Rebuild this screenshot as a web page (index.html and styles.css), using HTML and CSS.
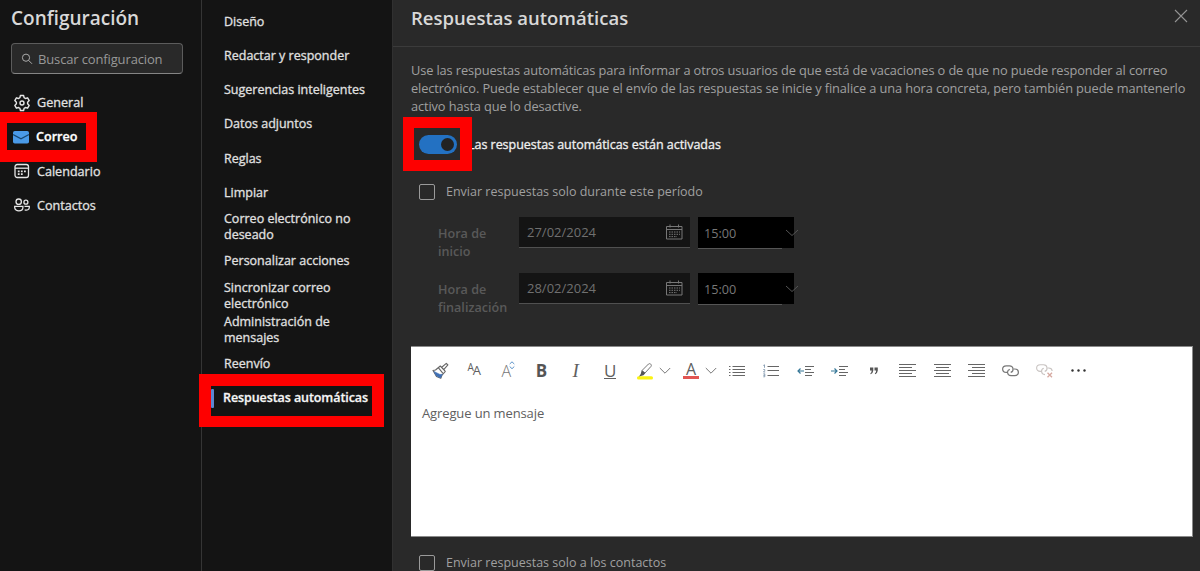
FILE: index.html
```html
<!DOCTYPE html>
<html lang="es">
<head>
<meta charset="utf-8">
<title>Configuración</title>
<link rel="stylesheet" href="styles.css">
</head>
<body>
<div class="app">
  <aside class="sidebar">
    <h1 class="title">Configuración</h1>
    <div class="search">
      <svg width="12" height="12" viewBox="0 0 12 12" fill="none" stroke="#aaa" stroke-width="1"><circle cx="5" cy="4.7" r="3.6"/><path d="M7.6 7.4 11 10.8"/></svg>
      <span class="search-text">Buscar configuracion</span>
    </div>
    <nav class="nav">
      <a class="nav-item">
        <svg width="18" height="18" viewBox="0 0 18 18" fill="none" stroke="#e6e6e6" stroke-width="1.4" stroke-linejoin="round"><path d="M7.4 1.5h3.2l.5 2.2 1.3.8 2.2-.7 1.6 2.8-1.6 1.6v1.6l1.6 1.6-1.6 2.8-2.2-.7-1.3.8-.5 2.2H7.4l-.5-2.2-1.3-.8-2.2.7-1.6-2.8 1.6-1.6V8.2L1.8 6.6l1.6-2.8 2.2.7 1.3-.8z"/><circle cx="9" cy="9" r="2"/></svg>
        <span>General</span></a>
      <a class="nav-item selected">
        <svg width="18" height="18" viewBox="0 0 18 18"><rect x="0" y="3" width="16" height="12.5" rx="1.8" fill="#4a9ae8"/><path d="M0 6.5 8 10.8 16 6.5" fill="none" stroke="#17466f" stroke-width="1.3"/></svg>
        <span>Correo</span></a>
      <a class="nav-item">
        <svg width="18" height="18" viewBox="0 0 18 18" fill="none" stroke="#e6e6e6" stroke-width="1.3"><rect x="2" y="2.5" width="13.5" height="13" rx="2.2"/><path d="M2 6.2h13.5"/><path d="M4.800 9.300h1.800m1.300 0h1.800m1.300 0h1.800M4.800 12.200h1.800m1.300 0h1.800" stroke-width="1.7"/></svg>
        <span>Calendario</span></a>
      <a class="nav-item">
        <svg width="18" height="18" viewBox="0 0 18 18" fill="none" stroke="#e6e6e6" stroke-width="1.3"><circle cx="5.7" cy="5.7" r="2.7"/><circle cx="12.9" cy="6.2" r="2"/><path d="M1.700 10.300h8.200v1.300c0 4.300-8.200 4.300-8.200 0zM11.500 10.300h4.800v1.200c0 2.300-2.200 3-4.600 2.300"/></svg>
        <span>Contactos</span></a>
    </nav>
    <div class="frame frame-mail"></div>
  </aside>

  <nav class="subnav">
    <a class="sub-item">Diseño</a>
    <a class="sub-item">Redactar y responder</a>
    <a class="sub-item">Sugerencias inteligentes</a>
    <a class="sub-item">Datos adjuntos</a>
    <a class="sub-item">Reglas</a>
    <a class="sub-item">Limpiar</a>
    <a class="sub-item">Correo electrónico no<br>deseado</a>
    <a class="sub-item">Personalizar acciones</a>
    <a class="sub-item">Sincronizar correo<br>electrónico</a>
    <a class="sub-item">Administración de<br>mensajes</a>
    <a class="sub-item">Reenvío</a>
    <a class="sub-item current">Respuestas automáticas</a>
    <div class="frame frame-replies"></div>
  </nav>

  <main class="panel">
    <header class="panel-head">
      <h2 class="panel-title">Respuestas automáticas</h2>
      <svg width="14" height="14" viewBox="0 0 14 14" stroke="#949494" stroke-width="1.1"><path d="M1 1l12 12M13 1 1 13"/></svg>
    </header>
    <div class="panel-body">
      <p class="intro">Use las respuestas automáticas para informar a otros usuarios de que está de vacaciones o de que no puede responder al correo<br>electrónico. Puede establecer que el envío de las respuestas se inicie y finalice a una hora concreta, pero también puede mantenerlo<br>activo hasta que lo desactive.</p>
      <div class="toggle-row">
        <span class="toggle"><span class="knob"></span></span>
        <span class="toggle-label">Las respuestas automáticas están activadas</span>
        <div class="frame frame-toggle"></div>
      </div>
      <div class="check-row">
        <span class="box"></span><span class="check-label">Enviar respuestas solo durante este período</span>
      </div>
      <div class="time-row">
        <span class="time-label">Hora de<br>inicio</span>
        <div class="date"><span>27/02/2024</span>
          <svg width="17" height="16" viewBox="0 0 17 16" fill="none" stroke="#777" stroke-width="1"><path d="M.5 2.500h15.500v12.500H.5zM.5 5.500H16M4 .5v3M12.500.5v3"/><path d="M3 8h11M3 10.300h11M3 12.600h8" stroke-dasharray="1.500 1"/></svg></div>
        <div class="hour"><span>15:00</span>
          <svg class="hour-chev" width="14" height="8" viewBox="0 0 14 8" fill="none" stroke="#555"><path d="M1 1l6 5.500L13 1"/></svg></div>
      </div>
      <div class="time-row">
        <span class="time-label">Hora de<br>finalización</span>
        <div class="date"><span>28/02/2024</span>
          <svg width="17" height="16" viewBox="0 0 17 16" fill="none" stroke="#777" stroke-width="1"><path d="M.5 2.500h15.500v12.500H.5zM.5 5.500H16M4 .5v3M12.500.5v3"/><path d="M3 8h11M3 10.300h11M3 12.600h8" stroke-dasharray="1.500 1"/></svg></div>
        <div class="hour"><span>15:00</span>
          <svg class="hour-chev" width="14" height="8" viewBox="0 0 14 8" fill="none" stroke="#555"><path d="M1 1l6 5.500L13 1"/></svg></div>
      </div>
      <section class="editor">
        <div class="toolbar">
          <span class="tool"><svg width="18" height="18" viewBox="0 0 18 18" fill="#fff" stroke="#666" stroke-width="1.1" stroke-linejoin="round"><path d="M10.500 5.500 15.300 1.300l1.600 1.600-4.200 4.800z"/><path d="M2 8.500 4.500 8l4.800-4 5 5.300-3.500 4.200-1 2.700-4.300-1.700z"/><path d="M3 9.500 9 12.500l2.300-.2L9.500 16l-4.300-2.300z" fill="#3f70b5" stroke="#3f70b5" stroke-width=".6"/><path d="M7.300 5.700 12 11.300"/></svg></span>
          <span class="tool"><span class="aa"><span class="aa-small">A</span><span class="aa-big">A</span></span></span>
          <span class="tool"><span class="asize">A</span><svg class="asize-arrows" width="6" height="9" viewBox="0 0 6 9" fill="none" stroke="#5b92c8"><path d="M.7 3 3 .8 5.300 3M.7 5.500 3 7.700l2.300-2.200"/></svg></span>
          <span class="tool bold">B</span>
          <span class="tool italic">I</span>
          <span class="tool under"><span class="under-glyph">U</span></span>
          <span class="tool"><svg width="18" height="18" viewBox="0 0 18 18"><rect x="1" y="14.200" width="16" height="3.400" rx="1.500" fill="#fbf312"/><path d="M6 8.500 12.500 2c1.300-1.200 3.700.7 2.500 2.400L9 11z" fill="#fff" stroke="#777"/><path d="M5.700 8.200 9.300 11.300 7.500 13.300 3 14.500 4.700 12z" fill="#555"/></svg></span>
          <svg class="chev" width="12" height="8" viewBox="0 0 12 8" fill="none" stroke="#777"><path d="M.8 1 6 6.200 11.200 1"/></svg>
          <span class="tool"><span class="acolor">A</span></span>
          <svg class="chev" width="12" height="8" viewBox="0 0 12 8" fill="none" stroke="#777"><path d="M.8 1 6 6.200 11.200 1"/></svg>
          <span class="tool"><svg width="16" height="14" viewBox="0 0 16 14" stroke="#666" stroke-width="1"><path d="M3.500 2.500H16M3.500 5.500H16M3.500 8.500H16M3.500 11.500H16M0 2.500h1.500M0 5.500h1.500M0 8.500h1.500M0 11.500h1.500"/></svg></span>
          <span class="tool"><svg width="16" height="14" viewBox="0 0 16 14" fill="none" stroke="#666"><path d="M4.500 2.500H16M4.500 6.500H16M4.500 11.500H16"/><path d="M.3 1.500 1.500.8v3M.3 5.500h1.400v1.200L.5 8h1.700M.3 9.800h1.500v3H.3m0-1.500h1.500" stroke="#718ba5" stroke-width=".8"/></svg></span>
          <span class="tool"><svg width="17" height="12" viewBox="0 0 17 12" fill="none" stroke="#666"><path d="M8 1.500h9M8 4.500h6M8 7.500h9M8 10.500h7"/><path d="M7 6H1M3.500 3.500 1 6l2.500 2.500" stroke="#377898" stroke-width="1.2"/></svg></span>
          <span class="tool"><svg width="17" height="12" viewBox="0 0 17 12" fill="none" stroke="#666"><path d="M8 1.500h9M8 4.500h6M8 7.500h9M8 10.500h7"/><path d="M0 6h6M3.500 3.500 6 6 3.500 8.500" stroke="#377898" stroke-width="1.2"/></svg></span>
          <span class="tool"><svg width="8" height="8" viewBox="0 0 8 8" fill="#555"><path d="M0 .5h3.300v3Q3 6.500.7 7.300L.3 6.400Q1.700 5.500 1.700 3.500H0zM4.500.5h3.300v3Q7.500 6.500 5.200 7.300l-.4-.9Q6.200 5.500 6.200 3.500H4.500z"/></svg></span>
          <span class="tool"><svg width="17" height="14" viewBox="0 0 17 14" stroke="#666"><path d="M0 .5h17M0 3.500h13M0 6.500h17M0 9.500h13M0 12.500h17"/></svg></span>
          <span class="tool"><svg width="17" height="14" viewBox="0 0 17 14" stroke="#666"><path d="M0 .5h17M2 3.500h13M0 6.500h17M2 9.500h13M0 12.500h17"/></svg></span>
          <span class="tool"><svg width="17" height="14" viewBox="0 0 17 14" stroke="#666"><path d="M0 .5h17M4 3.500h13M0 6.500h17M4 9.500h13M0 12.500h17"/></svg></span>
          <span class="tool"><svg width="17" height="12" viewBox="0 0 17 12" fill="none" stroke="#777" stroke-width="1.2"><path d="M5.500 7.400H4.300C-.6 7.400-.6.8 4.300.8h3.200c4.400 0 4.600 5.800 1.200 6.600"/><path d="M11.500 4h1.200c4.900 0 4.900 6.600 0 6.600H9C4.800 10.600 4.500 5.200 7.800 4.300"/></svg></span>
          <span class="tool"><svg width="17" height="15" viewBox="0 0 17 15" fill="none" stroke="#c9c4c2" stroke-width="1.1"><path d="M5.500 8.400H4.300C-.6 8.400-.6 1.800 4.300 1.800h3.200c4.400 0 4.600 5.800 1.200 6.600"/><path d="M11.500 5h1.200c2 0 3.300 1.200 3.500 3M9 11.600C4.800 11.600 4.500 6.200 7.800 5.300"/><path d="M11.500 9.800l4.500 4.500M16 9.800l-4.500 4.500" stroke="#d6a9a1" stroke-width="1.3"/></svg></span>
          <span class="tool"><svg width="15" height="3" viewBox="0 0 15 3" fill="#333"><circle cx="1.5" cy="1.5" r="1.2"/><circle cx="7.5" cy="1.5" r="1.2"/><circle cx="13.5" cy="1.5" r="1.2"/></svg></span>
        </div>
        <div class="placeholder">Agregue un mensaje</div>
      </section>
      <div class="check-row last">
        <span class="box"></span><span class="check-label contacts">Enviar respuestas solo a los contactos</span>
      </div>
    </div>
  </main>
</div>
</body>
</html>
```

FILE: styles.css
```css
* { box-sizing: border-box; }
body { margin: 0; background: #292929; font-family: "Open Sans", "Noto Sans", sans-serif; font-size: 13px; overflow: hidden; }
svg { display: block; flex: none; }
.app { display: grid; grid-template-columns: 201px 191px 1fr; width: 1200px; height: 571px; overflow: hidden; white-space: nowrap; }

.sidebar { position: relative; background: #141414; padding: 5px 0 0 11px; }
.title { margin: 0; font-size: 19px; line-height: 26px; font-weight: 600; color: #d8d8d8; }
.search { display: flex; align-items: center; gap: 5px; width: 172px; height: 31px; margin-top: 12px; padding-left: 9px; background: #292929; border: 1px solid #5c5c5c; border-bottom-color: #858585; border-radius: 4px; color: #989898; }
.search-text { letter-spacing: -0.14px; }
.nav { display: flex; flex-direction: column; margin-top: 11.5px; }
.nav-item { display: flex; align-items: center; gap: 6px; height: 34.25px; padding-left: 2px; color: #e2e2e2; font-size: 12.6px; -webkit-text-stroke: 0.3px #e2e2e2; }
.nav-item.selected { gap: 5px; color: #fff; font-weight: 600; -webkit-text-stroke-color: #fff; }

.frame { position: absolute; border: solid #fe0000; }
.frame-mail { left: 0; top: 112px; width: 97px; height: 50px; border-width: 11px 11px 12px 7px; }
.frame-replies { left: -3px; top: 374px; width: 185px; height: 53px; border-width: 12px 12px 11px 12px; }
.frame-toggle { left: -8px; top: -14px; width: 69px; height: 54px; border-width: 11px 12px 11px 11px; }

.subnav { position: relative; background: #141414; border-left: 1px solid #353535; padding: 4.5px 0 0 22px; }
.sub-item { display: flex; align-items: center; height: 34.25px; color: #e0e0e0; font-size: 12.5px; line-height: 16px; -webkit-text-stroke: 0.3px #e0e0e0; }
.sub-item.current { margin-left: -13px; color: #fff; font-weight: 600; letter-spacing: -0.08px; }
.sub-item.current::before { content: ""; width: 3px; height: 19px; margin-right: 9px; border-radius: 1px; background: #5c86d2; }

.panel { background: #292929; border-left: 1px solid #303030; }
.panel-head { display: flex; justify-content: space-between; height: 47px; padding: 5px 12px 0 18px; border-bottom: 1px solid #3b3b3b; }
.panel-head svg { margin-top: 4px; }
.panel-title { margin: 0; font-size: 18.5px; line-height: 26px; font-weight: 600; color: #d8d8d8; }
.panel-body { padding: 14px 0 0 18px; }
.intro { margin: 0; font-size: 12.8px; line-height: 18.2px; letter-spacing: -0.11px; color: #a0a0a0; }
.toggle-row { position: relative; display: flex; align-items: center; height: 28px; margin-top: 15px; padding-left: 8px; }
.toggle { display: flex; justify-content: flex-end; align-items: center; width: 38px; height: 19px; padding-right: 3px; border-radius: 10px; background: #2371c2; }
.knob { width: 13px; height: 13px; border-radius: 50%; background: #222; }
.toggle-label { margin-left: 11px; font-size: 12.5px; letter-spacing: -0.03px; color: #f0f0f0; -webkit-text-stroke: 0.3px #f0f0f0; }
.check-row { display: flex; align-items: center; gap: 11px; height: 20px; margin-top: 23px; padding-left: 8px; color: #a0a0a0; font-size: 12.5px; }
.box { width: 16px; height: 16px; border: 1px solid #9a9a9a; border-radius: 2px; }
.time-row { display: flex; height: 56px; padding-left: 27px; color: #686868; }
.check-row + .time-row { margin-top: 15px; }
.time-label { width: 81px; padding-top: 8px; line-height: 18px; font-size: 12.6px; font-weight: 600; color: #595959; }
.date { display: flex; align-items: center; justify-content: space-between; width: 171px; height: 31px; padding: 0 7px 0 8px; background: #141414; border-bottom: 1px solid #505050; color: #707070; }
.hour { position: relative; width: 96px; height: 31px; margin-left: 8px; padding: 0 6px; background: #000; line-height: 32px; font-size: 12.7px; color: #777; }
.hour::after { content: ""; position: absolute; left: 0; bottom: -1px; width: 84px; height: 1px; background: #555; }
.hour-chev { position: absolute; right: -5px; top: 12px; }

.editor { width: 782px; height: 191px; margin-top: 17px; background: #fff; border: 1px solid #8a8a8a; border-width: 1px 1px 1px 0; }
.toolbar { display: flex; align-items: center; height: 48px; padding-left: 12px; color: #606060; }
.tool { display: flex; align-items: center; justify-content: center; flex: none; width: 34.15px; height: 30px; font-size: 17px; line-height: 24px; }
.chev { margin: 0 3px 0 -3px; }
.aa { display: flex; align-items: flex-start; }
.aa-small { font-size: 10px; line-height: 10px; }
.aa-big { font-size: 13px; line-height: 17px; margin-left: -1px; }
.asize { color: #777; font-size: 16px; font-weight: 300; }
.asize-arrows { margin: -11px 0 0 -2px; }
.bold { font-weight: 700; color: #555; padding-right: 2px; }
.italic { font-family: "Liberation Serif", serif; font-style: italic; font-size: 19px; padding-right: 2px; }
.under { padding-right: 1px; }
.under-glyph { line-height: 15px; border-bottom: 1px solid #606060; }
.acolor { width: 16px; height: 17px; line-height: 15px; text-align: center; font-size: 16px; border-bottom: 3px solid #e25552; }
.placeholder { padding: 9px 0 0 11px; line-height: 18px; letter-spacing: -0.12px; color: #606060; }
.last { margin-top: 16px; }
```
